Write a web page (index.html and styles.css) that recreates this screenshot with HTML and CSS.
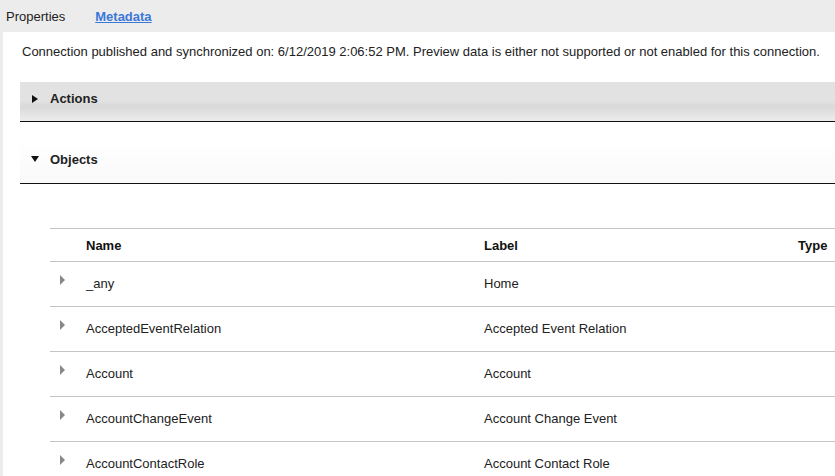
FILE: index.html
```html
<!DOCTYPE html>
<html lang="en">
<head>
    <meta charset="UTF-8">
    <title>Metadata</title>
    <link rel="stylesheet" href="styles.css">
</head>
<body>
    <!-- Tabs -->
    <div class="tabs">
        <span class="tab">Properties</span>
        <a class="tab active" href="#">Metadata</a>
    </div>

    <div class="panel">
        <p class="info">Connection published and synchronized on: 6/12/2019 2:06:52 PM. Preview data is either not supported or not enabled for this connection.</p>

        <!-- Actions -->
        <div class="section-head actions">
            <span class="arrow right"></span>
            <span>Actions</span>
        </div>

        <!-- Objects -->
        <div class="section-head objects">
            <span class="arrow down"></span>
            <span>Objects</span>
        </div>

        <table class="grid">
            <thead>
                <tr>
                    <th class="exp"></th>
                    <th class="name">Name</th>
                    <th class="label">Label</th>
                    <th class="type">Type</th>
                </tr>
            </thead>
            <tbody>
                <tr>
                    <td class="exp"><span class="caret"></span></td>
                    <td>_any</td>
                    <td>Home</td>
                    <td></td>
                </tr>
                <tr>
                    <td class="exp"><span class="caret"></span></td>
                    <td>AcceptedEventRelation</td>
                    <td>Accepted Event Relation</td>
                    <td></td>
                </tr>
                <tr>
                    <td class="exp"><span class="caret"></span></td>
                    <td>Account</td>
                    <td>Account</td>
                    <td></td>
                </tr>
                <tr>
                    <td class="exp"><span class="caret"></span></td>
                    <td>AccountChangeEvent</td>
                    <td>Account Change Event</td>
                    <td></td>
                </tr>
                <tr>
                    <td class="exp"><span class="caret"></span></td>
                    <td>AccountContactRole</td>
                    <td>Account Contact Role</td>
                    <td></td>
                </tr>
            </tbody>
        </table>
    </div>
</body>
</html>
```

FILE: styles.css
```css
body {
    margin: 0;
    font-family: 'Liberation Sans', Arial, sans-serif;
    font-size: 13px;
    color: #222;
    background: #ececec;
    overflow: hidden;
    height: 100vh;
    display: flex;
    flex-direction: column;
}

.tabs {
    height: 32px;
    flex-shrink: 0;
    display: flex;
    align-items: center;
    padding-left: 6px;
    gap: 30px;
}

.tab {
    color: #222;
    text-decoration: none;
}

.tab.active {
    color: #3a78d8;
    font-weight: bold;
    text-decoration: underline;
}

.panel {
    flex: 1;
    min-height: 0;
    overflow: hidden;
    margin-left: 3px;
    background: #ffffff;
    padding: 12px 0 0 17px;
}

.info {
    margin: 0 0 22px 2px;
    line-height: 16px;
}

.section-head {
    display: flex;
    align-items: center;
    height: 39px;
    padding-left: 11px;
    font-weight: bold;
    border-bottom: 1px solid #111;
    box-sizing: border-box;
}

.actions {
    height: 40px;
    padding-bottom: 6px;
    background: linear-gradient(#e2e2e2 0%, #e2e2e2 48%, #d9d9d9 62%, #ececec 100%);
}

.objects {
    margin-top: 18px;
    height: 44px;
    padding-bottom: 5px;
    background: linear-gradient(#ffffff 0%, #fcfcfc 50%, #f9f9f9 100%);
}

.arrow {
    width: 0;
    height: 0;
}

.arrow.right {
    border-top: 4px solid transparent;
    border-bottom: 4px solid transparent;
    border-left: 6px solid #111;
    margin-left: 1px;
    margin-right: 12px;
}

.arrow.down {
    border-left: 4px solid transparent;
    border-right: 4px solid transparent;
    border-top: 6px solid #111;
    margin-right: 11px;
}

.grid {
    margin: 44px 0 0 30px;
    border-collapse: collapse;
    width: 785px;
    table-layout: fixed;
}

.grid th,
.grid td {
    text-align: left;
    padding: 0;
    border-top: 1px solid #c4c4c4;
    border-bottom: 1px solid #c4c4c4;
}

.grid th {
    height: 32px;
    font-weight: bold;
    color: #111;
}

.grid td {
    height: 42px;
    padding-bottom: 2px;
    color: #222;
}

.grid .exp { width: 36px; }
.grid .name { width: 398px; }
.grid .label { width: 314px; }

.caret {
    display: inline-block;
    width: 0;
    height: 0;
    margin: 0 0 4px 10px;
    border-top: 5px solid transparent;
    border-bottom: 5px solid transparent;
    border-left: 5px solid #888;
}
```
